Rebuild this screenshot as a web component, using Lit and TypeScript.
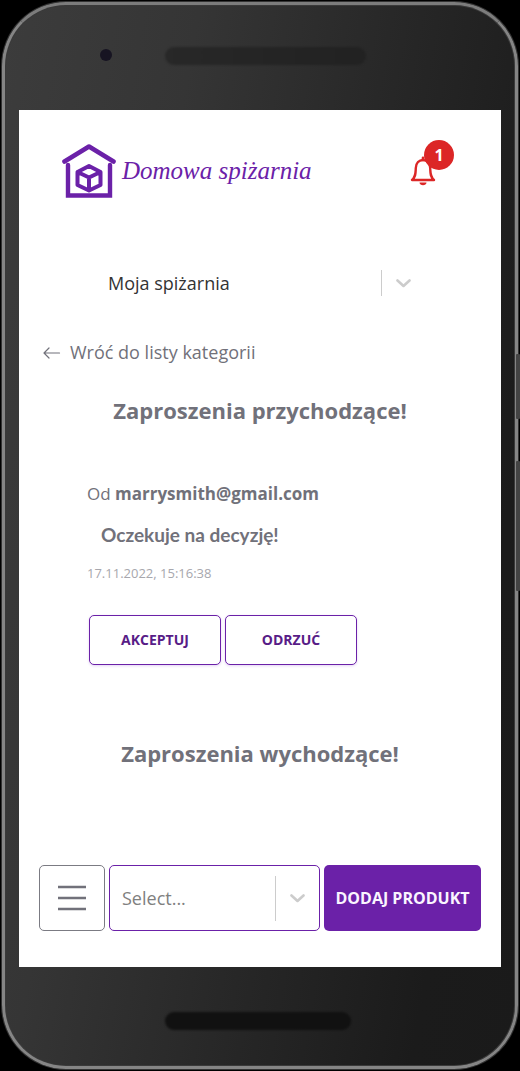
import { LitElement, html, css, svg } from "lit";
import { customElement } from "lit/decorators.js";

const chevron = svg`<path d="M1.5 1.5 L7.5 7 L13.5 1.5" fill="none" stroke="#cccccc" stroke-width="2.6" stroke-linecap="round" stroke-linejoin="round"/>`;

@customElement("select-box")
class SelectBox extends LitElement {
  static properties = {
    label: { type: String },
    value: { type: String },
    framed: { type: Boolean, reflect: true },
  };
  declare label: string;
  declare value: string;
  declare framed: boolean;

  static styles = css`
    :host {
      display: grid;
      grid-template-columns: 1fr auto;
      align-items: center;
      box-sizing: border-box;
      height: 48px;
    }
    :host([framed]) {
      height: 66px;
      border: 1px solid #6b21a8;
      border-radius: 5px;
      color: #808080;
    }
    select {
      grid-area: 1 / 1 / 2 / 3;
      appearance: none;
      width: 100%;
      height: 100%;
      padding: 0 54px 0 12px;
      border: 0;
      background: transparent;
      color: inherit;
      font: 18px/24px "Open Sans", sans-serif;
    }
    .indicator {
      grid-area: 1 / 2;
      display: flex;
      align-items: center;
      gap: 14px;
      padding-right: 14px;
      pointer-events: none;
    }
    .line {
      width: 1px;
      height: 26px;
      background: #cccccc;
    }
    :host([framed]) .line {
      height: 45px;
    }
    svg {
      display: block;
    }
  `;

  render() {
    return html`
      <select aria-label=${this.label}>
        <option>${this.value}</option>
      </select>
      <span class="indicator">
        <span class="line"></span>
        <svg width="15" height="9" viewBox="0 0 15 9" aria-hidden="true">${chevron}</svg>
      </span>
    `;
  }
}

@customElement("app-root")
class AppRoot extends LitElement {
  static styles = css`
    :host {
      display: block;
      background: #000;
      color: #71717a;
      font: 18px/24px "Open Sans", sans-serif;
    }
    * {
      box-sizing: border-box;
    }
    .stage {
      position: relative;
      min-height: 100vh;
      padding: 2px;
      display: flex;
    }
    .side {
      position: absolute;
      right: 0;
      width: 4px;
      background: #444;
      border-radius: 1px;
    }
    .power {
      top: 354px;
      height: 65px;
    }
    .volume {
      top: 461px;
      height: 130px;
    }
    .phone {
      flex: 1;
      min-width: 0;
      display: flex;
      flex-direction: column;
      padding: 0 14px;
      border: 3px solid #858585;
      border-top-color: #7c7c7c;
      border-radius: 64px;
      box-shadow: inset 0 0 0 1px #3a3a3a, 0 0 0 1px #333;
      background: linear-gradient(100deg, #3c3c3c 0%, #353535 28%, #262626 60%, #1b1b1b 85%, #1a1a1a 100%);
    }
    .top {
      height: 105px;
      display: grid;
      grid-template-columns: 93px 1fr;
      padding-top: 44px;
    }
    .lens {
      width: 12px;
      height: 12px;
      border-radius: 50%;
      background: #171422;
      justify-self: end;
    }
    .speaker {
      height: 18px;
      margin: -2px 135px 0 53px;
      border-radius: 9px;
      background: linear-gradient(90deg, #282828, #242424 60%, #222222);
      filter: blur(1px);
    }
    .bottom {
      height: 99px;
      padding: 45px 150px 0 146px;
    }
    .mouth {
      height: 18px;
      border-radius: 9px;
      background: #111;
      filter: blur(1px);
    }
    .screen {
      flex: 1;
      display: flex;
      flex-direction: column;
      padding: 0 20px 36px;
      background: #fff;
    }
    header {
      display: flex;
      justify-content: space-between;
      padding: 30px 27px 0 23px;
    }
    .brand {
      display: flex;
      align-items: center;
      gap: 6px;
      color: #6b21a8;
      text-decoration: none;
      font: italic 25px/32px "Liberation Serif", serif;
      padding-top: 4px;
    }
    .bell {
      position: relative;
      width: 44px;
      height: 48px;
      padding: 0;
      border: 0;
      background: none;
    }
    .bell svg {
      position: absolute;
      left: 0;
      top: 16px;
    }
    .badge {
      position: absolute;
      right: 0;
      top: 0;
      width: 30px;
      height: 30px;
      border-radius: 50%;
      background: #dc2626;
      color: #fff;
      font: 700 16px/30px "Open Sans", sans-serif;
    }
    .pantry {
      margin: 61px 56px 0 57px;
      color: #333;
    }
    .back {
      display: flex;
      align-items: center;
      gap: 9px;
      margin: 33px 0 0 4px;
      color: inherit;
      text-decoration: none;
    }
    h2 {
      margin: 0;
      text-align: center;
      font: 700 22px/32px "Open Sans", sans-serif;
    }
    .incoming {
      margin-top: 30px;
    }
    .invite {
      display: grid;
      gap: 16px;
      margin: 56px 48px 0;
    }
    p {
      margin: 0;
    }
    .from {
      font-size: 17px;
    }
    .status {
      padding-left: 14px;
      font: 700 19px/26px Lato, sans-serif;
    }
    time {
      font-size: 13px;
      line-height: 18px;
      color: #a7a7ad;
    }
    .actions {
      display: flex;
      gap: 4px;
      margin: 17px 0 0 2px;
    }
    .actions button {
      width: 132px;
      height: 50px;
      padding: 0;
      border: 1px solid #6b21a8;
      border-radius: 5px;
      background: #fff;
      color: #581c87;
      font: 700 14px/20px "Open Sans", sans-serif;
      box-shadow: 0 1px 3px #e4d4f4;
    }
    .outgoing {
      margin-top: 72px;
    }
    footer {
      display: grid;
      grid-template-columns: 66px 1fr 157px;
      gap: 4px;
      margin-top: auto;
      padding-top: 24px;
    }
    .menu {
      display: grid;
      place-items: center;
      padding: 0;
      border: 1px solid #7b7b83;
      border-radius: 5px;
      background: #fff;
    }
    .add {
      padding: 0;
      border: 0;
      border-radius: 5px;
      background: #6b21a8;
      color: #faf5ff;
      white-space: nowrap;
      font: 700 16px/24px "Open Sans", sans-serif;
    }
    svg {
      display: block;
    }
  `;

  render() {
    return html`
      <div class="stage">
        <div class="phone">
          <div class="top"><span class="lens"></span><span class="speaker"></span></div>
          <main class="screen">
            <header>
              <a class="brand" href="#">
                <svg width="54" height="54" viewBox="0 0 54 54" fill="none" stroke="#6b21a8" stroke-linecap="round" stroke-linejoin="round" aria-hidden="true">
                  <path d="M2.500 17.500 L27 2.500 L51.500 17.500" stroke-width="4.600" />
                  <path d="M6 21 V51.500 H48 V21" stroke-width="4.400" stroke-linejoin="miter" />
                  <path d="M27 22 L38.500 28 V41 L27 46.500 L15.500 41 V28 Z M15.500 28 L27 33.500 L38.500 28 M27 33.500 V46" stroke-width="4" />
                </svg>
                <span>Domowa spiżarnia</span>
              </a>
              <button class="bell" aria-label="Powiadomienia">
                <svg width="26" height="30" viewBox="0 0 26 30" aria-hidden="true">
                  <path d="M2 24 H24 C20 20.500 20.500 17 20.200 12 C20 7 17 4 13 4 C9 4 6 7 5.800 12 C5.500 17 6 20.500 2 24 Z" fill="none" stroke="#dc2626" stroke-width="2.400" stroke-linejoin="round" />
                  <path d="M13 1.800 V4" stroke="#dc2626" stroke-width="2.600" stroke-linecap="round" />
                  <path d="M9.500 26.500 H16.500 C16.500 30 9.500 30 9.500 26.500 Z" fill="#dc2626" />
                </svg>
                <span class="badge">1</span>
              </button>
            </header>
            <select-box class="pantry" label="Spiżarnia" value="Moja spiżarnia"></select-box>
            <a class="back" href="#">
              <svg width="18" height="14" viewBox="0 0 18 14" fill="none" stroke="#71717a" stroke-width="1.200" stroke-linecap="round" stroke-linejoin="round" aria-hidden="true">
                <path d="M16.500 8 H1 M6 3 L1 8 L6 13" />
              </svg>
              <span>Wróć do listy kategorii</span>
            </a>
            <h2 class="incoming">Zaproszenia przychodzące!</h2>
            <section class="invite">
              <p class="from">Od <b>marrysmith@gmail.com</b></p>
              <p class="status">Oczekuje na decyzję!</p>
              <time datetime="2022-11-17T15:16:38">17.11.2022, 15:16:38</time>
              <div class="actions">
                <button>AKCEPTUJ</button>
                <button>ODRZUĆ</button>
              </div>
            </section>
            <h2 class="outgoing">Zaproszenia wychodzące!</h2>
            <footer>
              <button class="menu" aria-label="Menu">
                <svg width="28" height="26" viewBox="0 0 28 26" stroke="#71717a" stroke-width="2.500" aria-hidden="true">
                  <path d="M0 2 H28 M0 13 H28 M0 24 H28" />
                </svg>
              </button>
              <select-box framed label="Kategoria" value="Select..."></select-box>
              <button class="add">DODAJ PRODUKT</button>
            </footer>
          </main>
          <div class="bottom"><div class="mouth"></div></div>
        </div>
        <span class="side power"></span>
        <span class="side volume"></span>
      </div>
    `;
  }
}
